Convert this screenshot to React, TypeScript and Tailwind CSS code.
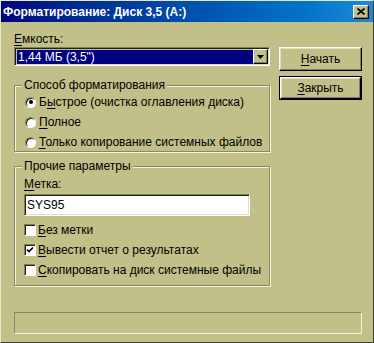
const face = "bg-[#c0c088]";

function U({ children }: { children: string }) {
  return <span className="underline decoration-1 underline-offset-[2px]">{children}</span>;
}

function Radio({ checked, children }: { checked?: boolean; children: React.ReactNode }) {
  return (
    <div className="flex h-[14px] items-center">
      <span className="ml-[1px] mr-[3px] flex h-[11px] w-[11px] items-center justify-center rounded-full border border-t-[#808058] border-l-[#808058] border-r-white border-b-white bg-white shadow-[inset_1px_1px_0_#202010]">
        {checked && <span className="h-[4px] w-[4px] rounded-full bg-black" />}
      </span>
      <span>{children}</span>
    </div>
  );
}

function Check({ checked, children }: { checked?: boolean; children: React.ReactNode }) {
  return (
    <div className="flex h-[14px] items-center">
      <span className="mr-[2px] flex h-[12px] w-[12px] items-center justify-center border border-t-[#808058] border-l-[#808058] border-r-white border-b-white bg-white shadow-[inset_1px_1px_0_#202010]">
        {checked && (
          <svg width="8" height="8" viewBox="0 0 8 8">
            <path d="M1 3.5 L3 5.5 L7 1.5" stroke="black" strokeWidth="1.6" fill="none" />
          </svg>
        )}
      </span>
      <span>{children}</span>
    </div>
  );
}

function Group({ title, className, children }: { title: string; className: string; children: React.ReactNode }) {
  return (
    <div className={`relative border border-[#8a8a60] pl-[9px] shadow-[inset_1px_1px_0_#f4f4e0,1px_1px_0_#f4f4e0] ${className}`}>
      <span className={`absolute -top-[8px] left-[7px] px-[2px] leading-[14px] ${face}`}>{title}</span>
      {children}
    </div>
  );
}

function Button({ isDefault, children }: { isDefault?: boolean; children: React.ReactNode }) {
  return (
    <div className={`h-[24px] w-[83px] ${isDefault ? "border border-black" : ""}`}>
      <div className="flex h-full w-full items-center justify-center border border-t-white border-l-white border-r-black border-b-black shadow-[inset_-1px_-1px_0_#808058,inset_1px_1px_0_#e0e0c0]">
        {children}
      </div>
    </div>
  );
}

export default function App() {
  return (
    <div
      className={`h-[343px] w-[374px] overflow-hidden border border-t-[#e8e8c8] border-l-[#e8e8c8] border-r-[#404030] border-b-[#404030] text-[12px] text-black ${face}`}
      style={{ fontFamily: '"Liberation Sans", Arial, sans-serif' }}
    >
      {/* title bar */}
      <div className="flex h-[21px] items-center bg-gradient-to-r from-[#000080] to-[#1a8ad8] pl-[2px] pr-[4px]">
        <span className="flex-1 font-bold text-white">Форматирование: Диск 3,5 (A:)</span>
        <div className={`flex h-[14px] w-[16px] items-center justify-center border border-t-white border-l-white border-r-black border-b-black shadow-[inset_-1px_-1px_0_#808058] ${face}`}>
          <svg width="8" height="7" viewBox="0 0 8 7">
            <path d="M0.5 0.5 L7.5 6.5 M7.5 0.5 L0.5 6.5" stroke="black" strokeWidth="1.8" />
          </svg>
        </div>
      </div>

      <div className="flex pl-[13px]">
        {/* left column */}
        <div className="w-[256px]">
          <div className="mt-[10px] h-[14px] leading-[14px]">
            <U>Е</U>мкость:
          </div>
          <div className="mt-[1px] flex h-[19px] border border-t-[#808058] border-l-[#808058] border-r-white border-b-white shadow-[inset_1px_1px_0_#202010,inset_-1px_-1px_0_#e0e0c0]">
            <div className="ml-[2px] mt-[2px] mb-[1px] flex flex-1 items-center bg-[#000080] pl-[1px] text-white">1,44 МБ (3,5")</div>
            <div className={`mt-[1px] mr-[1px] mb-[1px] flex w-[15px] items-center justify-center border border-t-white border-l-white border-r-black border-b-black shadow-[inset_-1px_-1px_0_#808058] ${face}`}>
              <svg width="7" height="4" viewBox="0 0 7 4">
                <path d="M0 0 H7 L3.5 4 Z" fill="black" />
              </svg>
            </div>
          </div>

          <Group title="Способ форматирования" className="mt-[19px] flex h-[67px] flex-col gap-[6px] pt-[9px]">
            <Radio checked>
              Б<U>ы</U>строе (очистка оглавления диска)
            </Radio>
            <Radio>
              <U>П</U>олное
            </Radio>
            <Radio>
              <U>Т</U>олько копирование системных файлов
            </Radio>
          </Group>

          <Group title="Прочие параметры" className="mt-[14px] h-[120px] pt-[10px]">
            <div className="h-[14px] leading-[14px]">
              <U>М</U>етка:
            </div>
            <div className="mt-[3px] flex h-[22px] w-[226px] items-center border border-t-[#808058] border-l-[#808058] border-r-white border-b-white bg-white pl-[2px] shadow-[inset_1px_1px_0_#202010,inset_-1px_-1px_0_#e0e0c0]">
              SYS95
            </div>
            <div className="mt-[7px] flex flex-col gap-[6px]">
              <Check>
                <U>Б</U>ез метки
              </Check>
              <Check checked>
                <U>В</U>ывести отчет о результатах
              </Check>
              <Check>
                <U>С</U>копировать на диск системные файлы
              </Check>
            </div>
          </Group>
        </div>

        {/* right column */}
        <div className="ml-[9px] flex flex-col gap-[5px] pt-[25px]">
          <Button>
            <span>
              <U>Н</U>ачать
            </span>
          </Button>
          <Button isDefault>
            <span>
              <U>З</U>акрыть
            </span>
          </Button>
        </div>
      </div>

      {/* status bar */}
      <div className="ml-[13px] mt-[26px] h-[22px] w-[348px] border border-t-[#8a8a60] border-l-[#8a8a60] border-r-[#f4f4e0] border-b-[#f4f4e0]" />
    </div>
  );
}
